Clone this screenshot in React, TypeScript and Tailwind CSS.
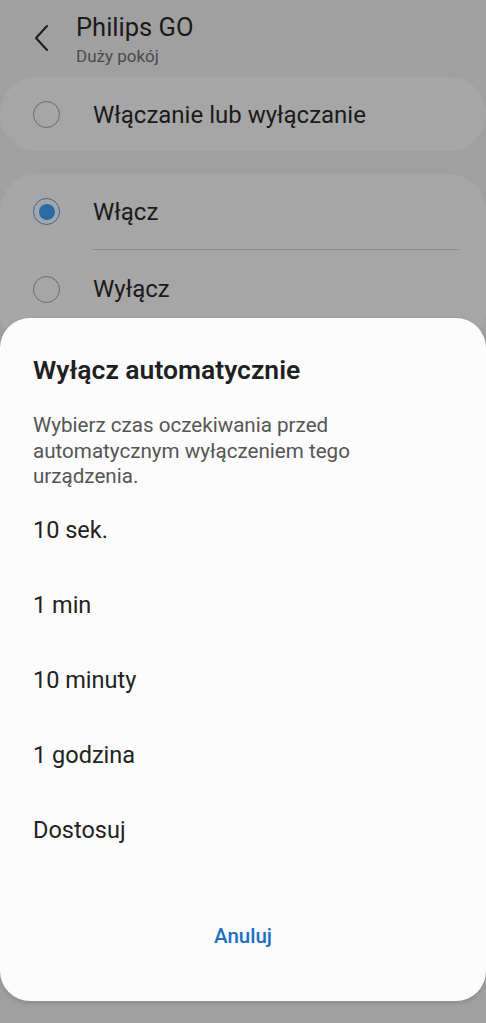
import React from 'react';

const Radio: React.FC<{ checked?: boolean }> = ({ checked }) => (
  <div
    className={`w-[27px] h-[27px] rounded-full flex items-center justify-center shrink-0 ${
      checked ? 'border-[1.5px] border-[#2c6aa6]' : 'border-[1.5px] border-[#6a6a6a]'
    }`}
  >
    {checked && <div className="w-[16px] h-[16px] rounded-full bg-[#2c6aa6]" />}
  </div>
);

const options = ['10 sek.', '1 min', '10 minuty', '1 godzina', 'Dostosuj'];

export default function App() {
  return (
    <div
      className="relative h-[1023px] w-[486px] overflow-hidden bg-[#a0a0a0]"
      style={{ fontFamily: 'Roboto, "Noto Sans", sans-serif' }}
    >
      {/* page behind the dimmed overlay */}
      <div className="flex items-start pt-[12px]">
        <div className="w-[76px] pl-[33px] pt-[12px]">
          <svg width="18" height="28" viewBox="0 0 18 28" fill="none">
            <path d="M14 2 L3 14 L14 26" stroke="#1c1c1c" strokeWidth="2" strokeLinecap="round" strokeLinejoin="round" />
          </svg>
        </div>
        <div className="flex flex-col">
          <span className="text-[25.5px] leading-[30px] text-[#1a1a1a]">Philips GO</span>
          <span className="text-[17px] leading-[22px] text-[#4a4a4a] mt-[3px]">Duży pokój</span>
        </div>
      </div>

      <div className="mt-[10px] h-[74px] rounded-[37px] bg-[#a6a6a6] flex items-center pl-[33px]">
        <Radio />
        <span className="ml-[33px] text-[24px] text-[#1a1a1a] pt-[1px]">Włączanie lub wyłączanie</span>
      </div>

      <div className="mt-[23px] rounded-[37px] bg-[#a6a6a6] pb-[20px]">
        <div className="h-[75px] flex items-center pl-[33px]">
          <Radio checked />
          <span className="ml-[33px] text-[24px] text-[#1a1a1a]">Włącz</span>
        </div>
        <div className="ml-[92px] mr-[27px] h-px bg-[#8e8e8e]" />
        <div className="h-[78px] flex items-center pl-[33px]">
          <Radio />
          <span className="ml-[33px] text-[24px] text-[#1a1a1a]">Wyłącz</span>
        </div>
      </div>

      {/* bottom dialog */}
      <div className="absolute left-0 right-0 top-[318px] h-[683px] rounded-[30px] bg-[#fcfcfc] shadow-[0_2px_4px_rgba(0,0,0,0.15)] flex flex-col px-[33px] pt-[37px]">
        <h2 className="text-[26.5px] leading-[30px] font-semibold text-[#1f1f1f]">Wyłącz automatycznie</h2>
        <p className="mt-[28px] text-[20.6px] leading-[25.5px] text-[#555555]">
          Wybierz czas oczekiwania przed
          <br />
          automatycznym wyłączeniem tego
          <br />
          urządzenia.
        </p>
        <div className="mt-[4px] flex flex-col">
          {options.map((o) => (
            <div key={o} className="h-[75px] flex items-center text-[23.5px] text-[#222222]">
              {o}
            </div>
          ))}
        </div>
        <div className="mt-[38px] h-[60px] flex items-center justify-center">
          <span className="text-[20.5px] font-medium text-[#1b6fc4]">Anuluj</span>
        </div>
      </div>
    </div>
  );
}
